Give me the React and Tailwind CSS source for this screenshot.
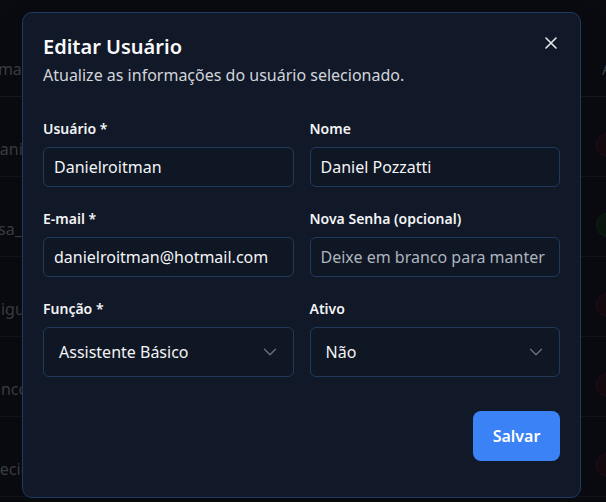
import { ChevronDown } from 'lucide-react';

const rows = [
  { left: 'daniel', shift: '-ml-[10px]', status: 'red' },
  { left: 'sa_admin', shift: '-ml-[2px]', status: 'green' },
  { left: 'miguel', shift: '-ml-[14px]', status: 'red' },
  { left: 'ancora', shift: '-ml-[8px]', status: 'red' },
  { left: 'decio', shift: '-ml-[10px]', status: 'red' },
];

function Field({ label, children }) {
  return (
    <div className="flex flex-col">
      <label className="mb-2 text-sm font-semibold leading-5 text-gray-100">{label}</label>
      {children}
    </div>
  );
}

function TextInput({ value, placeholder }) {
  return (
    <input
      readOnly
      defaultValue={value}
      placeholder={placeholder}
      className="h-10 w-full rounded-md border border-[#213a5c] bg-[#0f1624] px-2.5 text-base text-gray-100 placeholder:text-[#aeb4be] outline-none"
    />
  );
}

function Select({ value }) {
  return (
    <div className="flex h-[50px] items-center justify-between rounded-md border border-[#213a5c] bg-[#0f1624] pl-[15px] pr-3 text-base text-gray-100">
      <span>{value}</span>
      <ChevronDown className="h-[22px] w-[22px] text-gray-500" strokeWidth={1.5} />
    </div>
  );
}

export default function App() {
  return (
    <div className="relative h-[502px] w-full overflow-hidden bg-[#0a0b10] font-['Noto_Sans',sans-serif]">
      {/* table behind the dialog */}
      <div className="flex h-[97px] items-end justify-between border-b border-[#151922] pb-[15px] text-base text-[#3a3e46]">
        <div className="w-[22px] overflow-hidden whitespace-nowrap">
          <span className="-ml-[11px] inline-block">Email</span>
        </div>
        <span className="-mr-[22px] w-[26px] overflow-hidden whitespace-nowrap">Ações</span>
      </div>
      {rows.map((r) => (
        <div
          key={r.left}
          className="flex h-[80px] items-start justify-between border-b border-[#12151d] pt-[40px] text-base text-[#3a3e46]"
        >
          <div className="w-[22px] overflow-hidden whitespace-nowrap">
            <span className={`${r.shift} inline-block`}>{r.left}</span>
          </div>
          <span
            className={`-mr-[14px] -mt-[4px] h-[24px] w-[24px] rounded-full border ${
              r.status === 'red' ? 'border-[#24101a] bg-[#140b10]' : 'border-[#0f2418] bg-[#0b1510]'
            }`}
          />
        </div>
      ))}

      {/* dialog */}
      <div className="absolute left-[22px] top-[12px] w-[559px] rounded-[10px] border border-[#1f3a63] bg-[#111827] px-5 pb-[36px] pt-5 shadow-2xl">
        <button className="absolute right-[23px] top-[24px] text-gray-200">
          <svg width="12" height="12" viewBox="0 0 12 12" fill="none" stroke="currentColor" strokeWidth="1.6" strokeLinecap="round">
            <path d="M1 1l10 10M11 1L1 11" />
          </svg>
        </button>
        <h2 className="text-xl font-semibold leading-7 text-gray-50">Editar Usuário</h2>
        <p className="mt-0.5 text-base leading-6 text-gray-300">Atualize as informações do usuário selecionado.</p>

        <div className="mt-8 grid grid-cols-2 gap-x-4 gap-y-[22px]">
          <Field label="Usuário *">
            <TextInput value="Danielroitman" />
          </Field>
          <Field label="Nome">
            <TextInput value="Daniel Pozzatti" />
          </Field>
          <Field label="E-mail *">
            <TextInput value="danielroitman@hotmail.com" />
          </Field>
          <Field label="Nova Senha (opcional)">
            <TextInput placeholder="Deixe em branco para manter" />
          </Field>
          <Field label="Função *">
            <Select value="Assistente Básico" />
          </Field>
          <Field label="Ativo">
            <Select value="Não" />
          </Field>
        </div>

        <div className="mt-[34px] flex justify-end">
          <button className="h-[50px] w-[87px] rounded-lg bg-[#3b82f6] text-base font-semibold text-white">
            Salvar
          </button>
        </div>
      </div>
    </div>
  );
}
